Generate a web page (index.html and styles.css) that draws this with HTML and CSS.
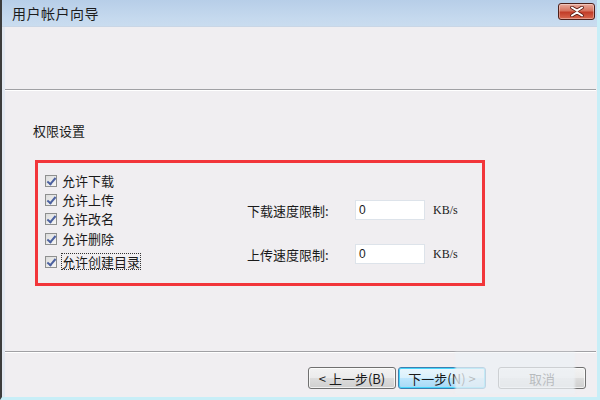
FILE: index.html
```html
<!DOCTYPE html>
<html lang="zh-CN">
<head>
    <meta charset="UTF-8">
    <title>用户帐户向导</title>
    <link rel="stylesheet" href="styles.css">
</head>
<body>

    <div class="window">
        <!-- Title bar -->
        <div class="titlebar">
            <span class="title">用户帐户向导</span>
            <button class="close-btn" title="关闭">
                <svg width="16" height="11" viewBox="0 0 16 11">
                    <path d="M3 1.5 L8 4.5 L13 1.5 M3 9.5 L8 6.5 L13 9.5" fill="none" stroke="#5a1c14" stroke-width="3.6" stroke-linecap="round"/>
                    <path d="M3 1.5 L8 4.5 L13 1.5 M3 9.5 L8 6.5 L13 9.5" fill="none" stroke="#fff" stroke-width="2" stroke-linecap="round"/>
                </svg>
            </button>
        </div>

        <div class="client">
            <div class="header"></div>
            <div class="separator"></div>

            <div class="content">
                <p class="section-title">权限设置</p>

                <div class="perm-box">
                    <div class="perm-list">
                        <label class="check-row"><span class="check"></span>允许下载</label>
                        <label class="check-row"><span class="check"></span>允许上传</label>
                        <label class="check-row"><span class="check"></span>允许改名</label>
                        <label class="check-row"><span class="check"></span>允许删除</label>
                        <label class="check-row"><span class="check"></span><span class="focused">允许创建目录</span></label>
                    </div>

                    <div class="speed-list">
                        <div class="speed-row">
                            <span class="speed-label">下载速度限制:</span>
                            <span class="speed-input">0</span>
                            <span class="unit">KB/s</span>
                        </div>
                        <div class="speed-row">
                            <span class="speed-label">上传速度限制:</span>
                            <span class="speed-input">0</span>
                            <span class="unit">KB/s</span>
                        </div>
                    </div>
                </div>
            </div>

            <div class="separator"></div>

            <div class="footer">
                <button class="btn">&lt; 上一步(<u>B</u>)</button>
                <button class="btn btn-default">下一步(<u>N</u>) &gt;</button>
                <button class="btn btn-cancel">取消</button>
            </div>

            <!-- Blurred watermark patch over the footer -->
            <div class="watermark"></div>
        </div>
    </div>

</body>
</html>
```

FILE: styles.css
```css
* {
    margin: 0;
    padding: 0;
    box-sizing: border-box;
}

body {
    width: 600px;
    height: 400px;
    overflow: hidden;
    font-family: "Noto Sans CJK SC", "Liberation Sans", sans-serif;
    font-size: 13px;
    color: #1a1a1a;
    background: #f0eef1;
}

.window {
    height: 400px;
    display: flex;
    flex-direction: column;
    border-left: 2px solid #3c3c3c;
    border-right: 3px solid #c8eef7;
    border-bottom: 3px solid #c8eef7;
}

/* Title bar */
.titlebar {
    height: 27px;
    display: flex;
    align-items: center;
    justify-content: space-between;
    padding: 0 2px 0 10px;
    background: linear-gradient(#b7cee8, #c5d9ee 70%, #c9dcef);
    border-bottom: 1px solid #c9d6e6;
}

.title {
    font-size: 14px;
    color: #1c1c1c;
    letter-spacing: 0.5px;
}

.close-btn {
    width: 37px;
    height: 17px;
    margin-bottom: 4px;
    border: 1px solid #4e2019;
    border-radius: 3px;
    background: linear-gradient(#e9ab9d, #d6745f 45%, #c23d28 55%, #d9694f);
    display: flex;
    align-items: center;
    justify-content: center;
    box-shadow: inset 0 0 0 1px rgba(255, 255, 255, 0.35);
}

.client {
    flex: 1;
    display: flex;
    flex-direction: column;
    position: relative;
    border-left: 3px solid #e2e8f1;
    background: #f0eef1;
}

.header {
    height: 62px;
}

.separator {
    height: 2px;
    border-top: 1px solid #a0a0a4;
    border-bottom: 1px solid #ffffff;
    margin-right: 1px;
}

/* Permissions */
.content {
    height: 260px;
    padding: 32px 0 0 28px;
}

.section-title {
    line-height: 16px;
    margin-bottom: 21px;
}

.perm-box {
    width: 450px;
    height: 126px;
    margin-left: 2px;
    border: 3px solid #f2353a;
    display: flex;
    padding: 8px 0 0 7px;
}

.perm-list {
    width: 202px;
    display: flex;
    flex-direction: column;
}

.check-row {
    height: 19px;
    line-height: 19px;
    display: flex;
    align-items: center;
    gap: 5px;
}

.check-row:nth-child(4) {
    margin-top: 1px;
}

.check-row:nth-child(5) {
    margin-top: 4px;
}

.check {
    width: 12px;
    height: 12px;
    border: 1px solid #8e8f8f;
    background: linear-gradient(135deg, #dcdcdc, #f6f6f6);
    position: relative;
}

.check::after {
    content: '';
    position: absolute;
    left: 3px;
    top: 0px;
    width: 3px;
    height: 7px;
    border: solid #4c61a0;
    border-width: 0 2px 2px 0;
    transform: rotate(40deg);
}

.focused {
    outline: 1px dotted #333;
    line-height: 15px;
}

.speed-list {
    display: flex;
    flex-direction: column;
    gap: 24px;
    padding-top: 29px;
}

.speed-row {
    height: 20px;
    display: flex;
    align-items: center;
}

.speed-label {
    width: 108px;
}

.speed-input {
    width: 70px;
    height: 20px;
    background: #fff;
    border: 1px solid #dde3ea;
    padding-left: 3px;
    line-height: 18px;
    font-family: "Liberation Sans", sans-serif;
    font-size: 12px;
}

.unit {
    margin-left: 8px;
    font-family: "Liberation Serif", serif;
    font-size: 12px;
}

/* Footer buttons */
.footer {
    flex: 1;
    display: flex;
    align-items: flex-start;
    padding: 14px 0 0 303px;
    gap: 2px;
}

.btn {
    width: 88px;
    height: 22px;
    font-family: "Noto Sans CJK SC", "Liberation Sans", sans-serif;
    font-size: 13px;
    color: #1a1a1a;
    border: 1px solid #707070;
    border-radius: 3px;
    background: linear-gradient(#f2f2f2, #ebebeb 50%, #dddddd 51%, #cfcfcf);
    box-shadow: inset 0 0 0 1px rgba(255, 255, 255, 0.7);
}

.btn u {
    text-decoration: none;
}

.btn-default {
    border-color: #3c7fb1;
    background: linear-gradient(#eaf6fd, #d9f0fc 50%, #bee6fd 51%, #a7d9f5);
    box-shadow: inset 0 0 0 1px #48d6fb;
}

.btn-cancel {
    margin-left: 10px;
}

.watermark {
    position: absolute;
    left: 450px;
    top: 325px;
    width: 120px;
    height: 42px;
    background: rgba(236, 240, 244, 0.75);
    filter: blur(1px);
}
```
